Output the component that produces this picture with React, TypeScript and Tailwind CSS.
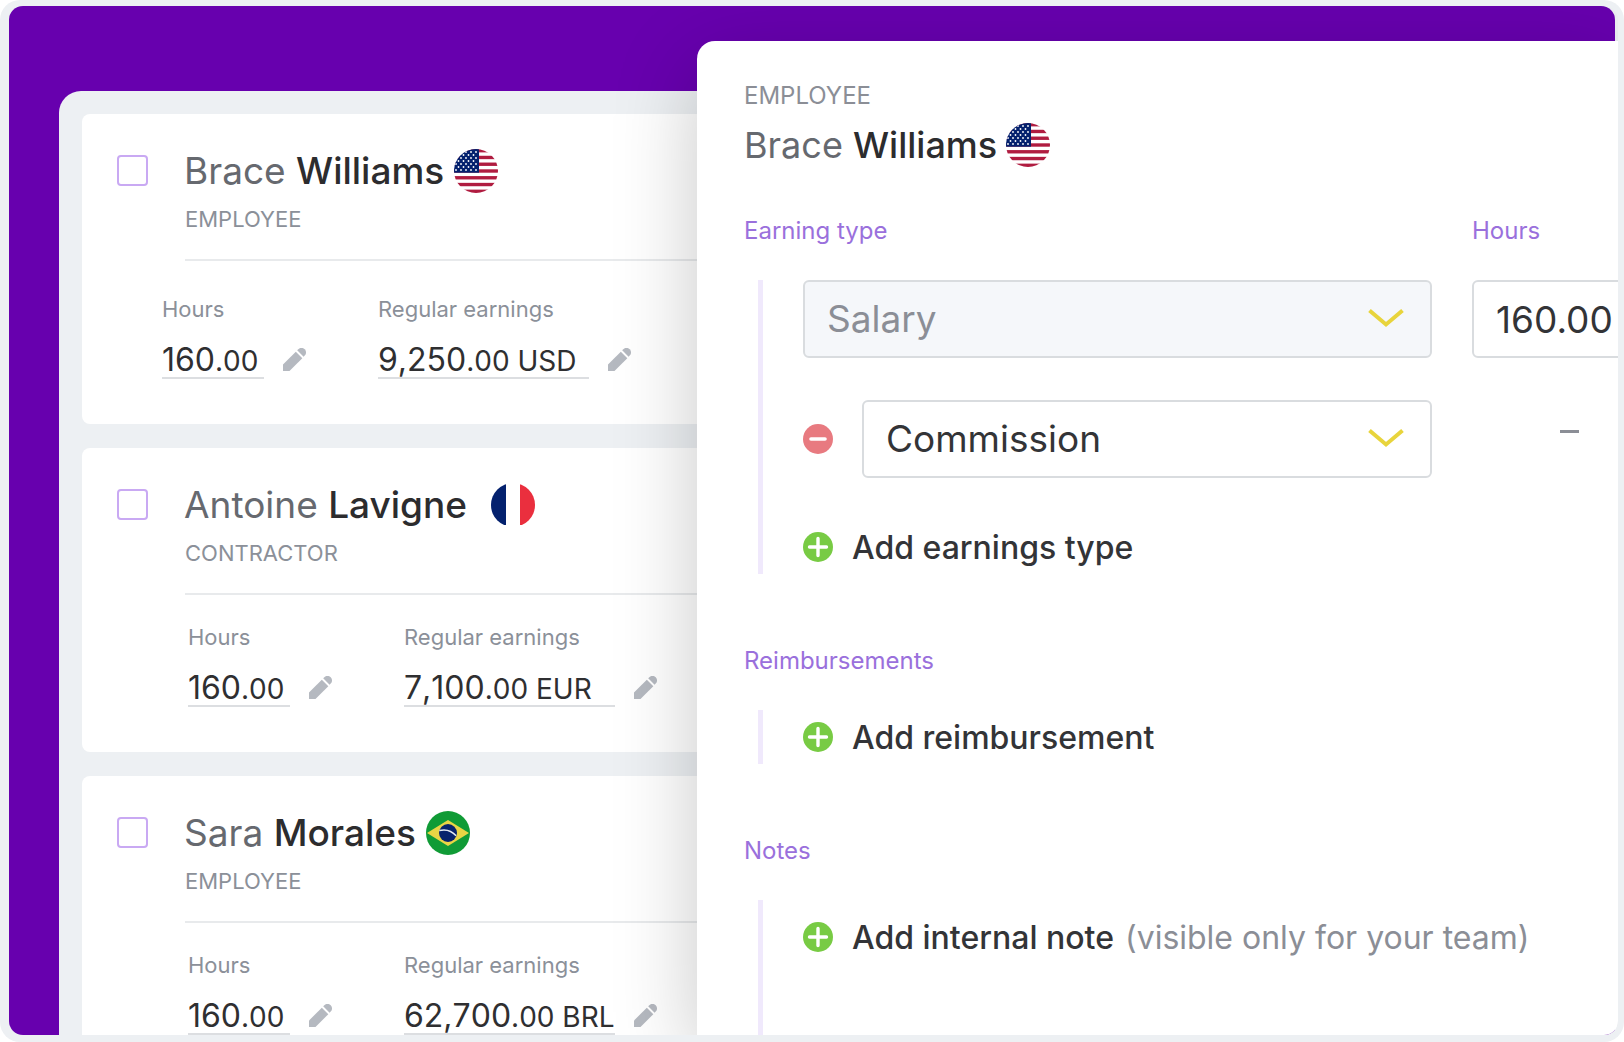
import React from "react";

const Flag = ({ country }: { country: string }) => {
  const stripes = [0, 1, 2, 3, 4, 5, 6];

  if (country === "fr") {
    return (
      <svg viewBox="0 0 44 44" className="w-11 h-11 shrink-0" aria-label="France">
        <clipPath id="clip-fr">
          <circle cx="22" cy="22" r="22" />
        </clipPath>
        <g clipPath="url(#clip-fr)">
          <rect width="44" height="44" fill="#fff" />
          <rect y="1" width="15" height="41" fill="#04216e" />
          <rect x="29" y="1" width="15" height="41" fill="#ea2f3e" />
        </g>
      </svg>
    );
  }

  if (country === "br") {
    return (
      <svg viewBox="0 0 44 44" className="w-11 h-11 shrink-0" aria-label="Brazil">
        <circle cx="22" cy="22" r="22" fill="#109b36" />
        <path d="M1 22 22 9 43 22 22 35z" fill="#e9d545" />
        <circle cx="22" cy="22" r="9" fill="#08246d" />
        <path
          d="M13.300 19.500c6-1.500 12.500.300 16.800 5.300"
          fill="none"
          stroke="#e6ebf2"
          strokeWidth="1.500"
        />
      </svg>
    );
  }

  return (
    <svg viewBox="0 0 44 44" className="w-11 h-11 shrink-0" aria-label="United States">
      <clipPath id="clip-us">
        <circle cx="22" cy="22" r="22" />
      </clipPath>
      <g clipPath="url(#clip-us)">
        <rect width="44" height="44" fill="#fff" />
        {stripes.map((s) => (
          <rect key={s} y={s * 6.77} width="44" height="3.385" fill="#b01c40" />
        ))}
        <rect width="25" height="23.700" fill="#04216e" />
        {[2, 5, 8, 11, 14, 17, 20].map((y, row) =>
          [2, 7, 12, 17, 22].map((x) => (
            <circle
              key={`${x}-${y}`}
              cx={row % 2 ? x - 2.5 : x}
              cy={y + 1}
              r="0.900"
              fill="#fff"
            />
          ))
        )}
      </g>
    </svg>
  );
};

const PencilIcon = () => (
  <svg viewBox="0 0 23 23" className="w-[23px] h-[23px]" fill="#b5b9c0" aria-hidden="true">
    <path d="M0 23v-6.500L12.800 3.700l6.500 6.500L6.500 23z" />
    <path d="M14.200 2.300 15.300 1.200a4.400 4.400 0 0 1 6.400 6.400l-1.100 1.100z" />
  </svg>
);

const PlusIcon = () => (
  <svg viewBox="0 0 30 30" className="w-[30px] h-[30px] shrink-0" aria-hidden="true">
    <circle cx="15" cy="15" r="15" fill="#78cb44" />
    <path
      d="M15 6.500v17M6.500 15h17"
      stroke="#fff"
      strokeWidth="3.400"
      strokeLinecap="round"
    />
  </svg>
);

const MinusIcon = () => (
  <svg viewBox="0 0 30 30" className="w-[30px] h-[30px]" aria-hidden="true">
    <circle cx="15" cy="15" r="15" fill="#e87a80" />
    <path d="M8 15h14" stroke="#fff" strokeWidth="3.600" strokeLinecap="round" />
  </svg>
);

const ChevronIcon = () => (
  <svg
    viewBox="0 0 36 20"
    className="pointer-events-none absolute right-7 top-7 w-9 h-5"
    aria-hidden="true"
  >
    <path d="M1.500 2.500 18 16.500 34.500 2.500" fill="none" stroke="#e8d43c" strokeWidth="4" />
  </svg>
);

const Amount = ({
  label,
  whole,
  rest,
  width,
}: {
  label: string;
  whole: string;
  rest: string;
  width: string;
}) => (
  <div>
    <p className="text-[22px] leading-7 text-[#8b9099]">{label}</p>
    <div className="mt-5 flex items-center">
      <p
        className={`${width} border-b-2 border-[#dcdee1] text-[32px] leading-[34px] text-[#2f2f31] whitespace-nowrap [font-kerning:none]`}
      >
        {whole}
        <span className="text-[28px] leading-none">{rest}</span>
      </p>
      <button type="button" aria-label={`Edit ${label}`} className="mb-1 ml-[19px]">
        <PencilIcon />
      </button>
    </div>
  </div>
);

const AddButton = ({ label, hint }: { label: string; hint?: string }) => (
  <button
    type="button"
    className="flex items-center gap-[19px] text-left text-[32px] leading-10 font-medium text-[#333437] whitespace-nowrap"
  >
    <PlusIcon />
    <span className="pt-0.5">
      {label}
      {hint && <span className="ml-[11px] font-normal text-[#8b8e96]">{hint}</span>}
    </span>
  </button>
);

const App = () => {
  const workers = [
    {
      id: "brace",
      first: "Brace",
      last: "Williams",
      role: "EMPLOYEE",
      country: "us",
      flagGap: "gap-2.5",
      amounts: "pt-[34px] pl-20",
      whole: "9,250",
      rest: ".00 USD",
    },
    {
      id: "antoine",
      first: "Antoine",
      last: "Lavigne",
      role: "CONTRACTOR",
      country: "fr",
      flagGap: "gap-6",
      amounts: "pt-7 pl-[106px]",
      whole: "7,100",
      rest: ".00 EUR",
    },
    {
      id: "sara",
      first: "Sara",
      last: "Morales",
      role: "EMPLOYEE",
      country: "br",
      flagGap: "gap-2.5",
      amounts: "pt-7 pl-[106px]",
      whole: "62,700",
      rest: ".00 BRL",
    },
  ];

  return (
    <div className="h-screen bg-white font-['Inter',sans-serif]">
      <div className="h-full overflow-hidden rounded-[20px] bg-[#edf0f3] pt-1.5 pb-[7px] pl-[9px] pr-1.5">
        <div className="h-full overflow-hidden rounded-[14px]">
          <div className="mr-[3px] flex h-full rounded-tr-[14px] bg-[#6700ae]">
            <main className="mt-[85px] ml-[50px] w-[638px] shrink-0 overflow-hidden rounded-tl-[22px] bg-[#edf0f3] pt-[23px] pl-[23px]">
              <div className="flex flex-col gap-6">
                {workers.map((w) => (
                  <section key={w.id} className="rounded-l-lg bg-white pt-[35px] pb-[45px]">
                    <div className="flex h-11 items-center pl-[35px]">
                      <input
                        id={w.id}
                        type="checkbox"
                        className="mb-0.5 w-[31px] h-[31px] shrink-0 appearance-none rounded-[4px] border-2 border-[#c9a9f3] bg-white checked:bg-[#c9a9f3]"
                      />
                      <label
                        htmlFor={w.id}
                        className={`${w.flagGap} ml-9 flex items-center text-[37px] leading-[44px] text-[#66696f] whitespace-nowrap`}
                      >
                        <span>
                          {w.first}{" "}
                          <span className="font-medium text-[#2c2c2e]">{w.last}</span>
                        </span>
                        <Flag country={w.country} />
                      </label>
                    </div>
                    <div className="ml-[103px] border-b-2 border-[#e8eaec] pt-3 pb-[26px]">
                      <p className="text-[22px] leading-7 text-[#8b9099]">{w.role}</p>
                    </div>
                    <div className={`${w.amounts} flex gap-[72px]`}>
                      <Amount label="Hours" whole="160" rest=".00" width="w-[102px]" />
                      <Amount
                        label="Regular earnings"
                        whole={w.whole}
                        rest={w.rest}
                        width="w-[211px]"
                      />
                    </div>
                  </section>
                ))}
              </div>
            </main>

            <aside className="relative mt-[35px] -mr-[3px] min-w-0 flex-1 rounded-tl-[18px] bg-white pt-[41px] shadow-[0_24px_84px_rgba(0,0,0,0.22)]">
              <div className="h-full overflow-hidden pl-[47px]">
                <p className="text-[24px] leading-7 text-[#8b8e96]">EMPLOYEE</p>
                <h2 className="mt-[13px] flex items-center gap-[9px] text-[36px] leading-[44px] text-[#66696f] whitespace-nowrap">
                  <span>
                    Brace <span className="font-medium text-[#2c2c2e]">Williams</span>
                  </span>
                  <Flag country="us" />
                </h2>

                <div className="mt-12 grid grid-cols-[688px_220px] gap-x-10 text-[24px] leading-8 text-[#9a70dc]">
                  <label htmlFor="earning-type">Earning type</label>
                  <label htmlFor="hours">Hours</label>
                </div>

                <div className="mt-[33px] ml-3.5 border-l-[5px] border-[#f0e9fc] pl-10">
                  <div className="flex gap-10">
                    <div className="relative w-[629px] shrink-0">
                      <select
                        id="earning-type"
                        className="h-[78px] w-full appearance-none rounded-md border-2 border-[#d9dcdf] bg-[#f5f7fa] px-[22px] text-[37px] text-[#8b8e96]"
                      >
                        <option>Salary</option>
                      </select>
                      <ChevronIcon />
                    </div>
                    <input
                      id="hours"
                      type="text"
                      defaultValue="160.00"
                      className="h-[78px] w-[220px] shrink-0 rounded-md border-2 border-[#d9dcdf] bg-white px-[22px] text-[37px] text-[#333437]"
                    />
                  </div>

                  <div className="mt-[42px] flex items-center">
                    <button type="button" aria-label="Remove commission" className="mr-[29px]">
                      <MinusIcon />
                    </button>
                    <div className="relative w-[570px] shrink-0">
                      <select
                        aria-label="Second earning type"
                        className="h-[78px] w-full appearance-none rounded-md border-2 border-[#d9dcdf] bg-white px-[22px] text-[37px] text-[#333437]"
                      >
                        <option>Commission</option>
                      </select>
                      <ChevronIcon />
                    </div>
                    <div className="mb-4 ml-32 h-[3px] w-[19px] shrink-0 bg-[#8b8e96]" />
                  </div>

                  <div className="pt-12 pb-1.5">
                    <AddButton label="Add earnings type" />
                  </div>
                </div>

                <h3 className="mt-[71px] text-[24px] leading-8 text-[#9a70dc]">Reimbursements</h3>
                <div className="mt-[33px] ml-3.5 border-l-[5px] border-[#f0e9fc] py-1.5 pl-10">
                  <AddButton label="Add reimbursement" />
                </div>

                <h3 className="mt-[71px] text-[24px] leading-8 text-[#9a70dc]">Notes</h3>
                <div className="mt-[33px] ml-3.5 h-40 border-l-[5px] border-[#f0e9fc] pt-4 pl-10">
                  <AddButton label="Add internal note" hint="(visible only for your team)" />
                </div>
              </div>
            </aside>
          </div>
        </div>
      </div>
    </div>
  );
};

export default App;
